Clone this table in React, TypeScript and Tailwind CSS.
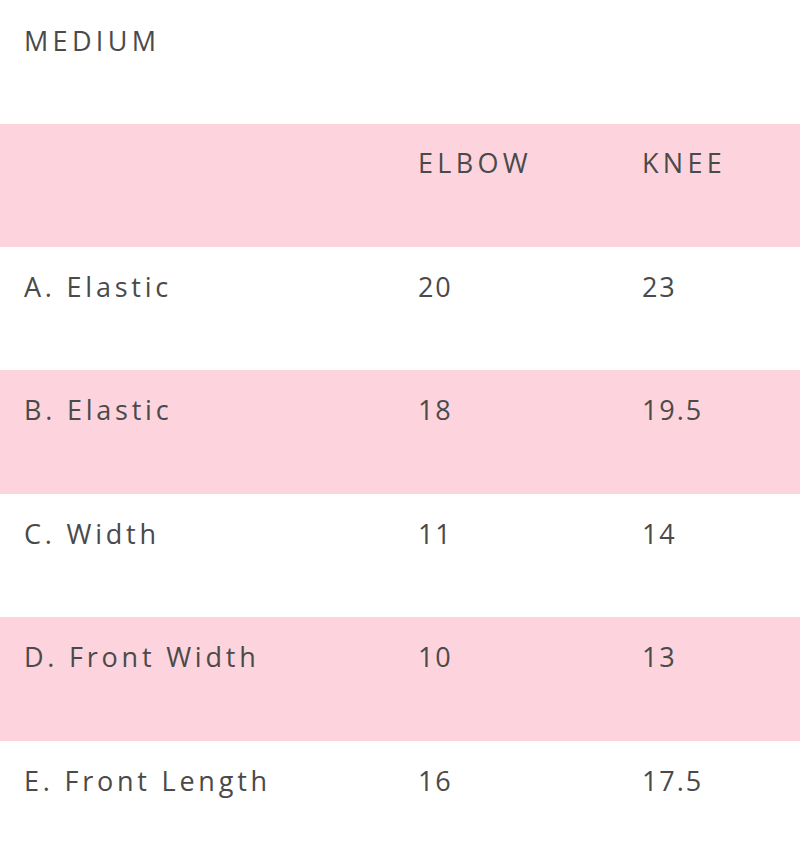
const rows = [
  { label: "A. Elastic", elbow: "20", knee: "23" },
  { label: "B. Elastic", elbow: "18", knee: "19.5" },
  { label: "C. Width", elbow: "11", knee: "14" },
  { label: "D. Front Width", elbow: "10", knee: "13" },
  { label: "E. Front Length", elbow: "16", knee: "17.5" },
];

export default function App() {
  return (
    <div
      className="w-[800px] h-[864px] bg-white text-[#4a4a4a] overflow-hidden"
      style={{ fontFamily: '"Open Sans", "DejaVu Sans", sans-serif' }}
    >
      {/* Size heading */}
      <div className="h-[124px] px-6 pt-[25px]">
        <h2 className="text-[27px] leading-[32px] tracking-[0.16em] uppercase">Medium</h2>
      </div>

      {/* Size table */}
      <div className="grid grid-cols-[394px_224px_1fr] h-[123px] bg-[#fdd4dd] px-6 pt-[23px] text-[27px] leading-[32px] tracking-[0.16em] uppercase">
        <div></div>
        <div>Elbow</div>
        <div>Knee</div>
      </div>
      {rows.map((row, i) => (
        <div
          key={row.label}
          className={
            "grid grid-cols-[394px_224px_1fr] h-[123.4px] px-6 pt-[24px] text-[27px] leading-[32px] " +
            (i % 2 === 1 ? "bg-[#fdd4dd]" : "bg-white")
          }
        >
          <div className="tracking-[0.14em]">{row.label}</div>
          <div className="tracking-[0.07em]">{row.elbow}</div>
          <div className="tracking-[0.07em]">{row.knee}</div>
        </div>
      ))}
    </div>
  );
}
